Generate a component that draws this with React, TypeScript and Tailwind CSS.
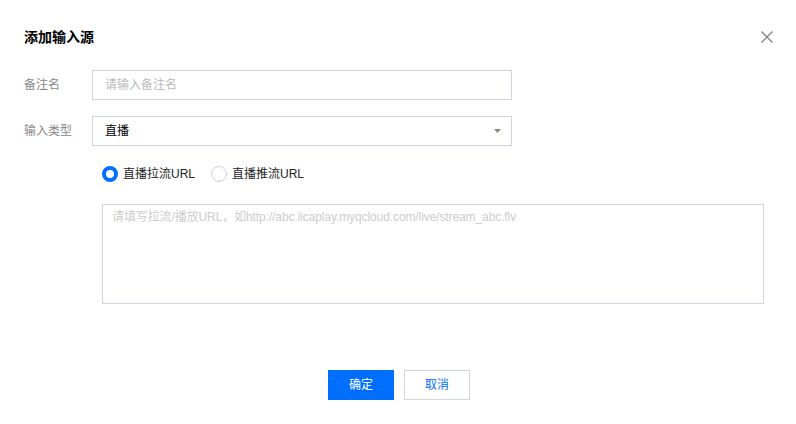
const font = { fontFamily: '"Liberation Sans", "Noto Sans CJK SC", sans-serif' };

function Radio({ checked, label }: { checked?: boolean; label: string }) {
  return (
    <label className="flex items-center gap-[5px] cursor-pointer">
      <span
        className={`h-4 w-4 rounded-full box-border ${checked ? 'border-[4px] border-[#006eff] bg-white' : 'border border-[#ccd2dc] bg-white'}`}
      />
      <span className="text-[12px] text-[#222]">{label}</span>
    </label>
  );
}

export default function App() {
  return (
    <div className="w-[796px] h-[424px] bg-white relative" style={font}>
      {/* header */}
      <div className="flex items-center justify-between pl-6 pr-[22px] pt-[27px]">
        <h3 className="text-[14px] font-bold text-[#000] leading-[20px]">添加输入源</h3>
        <button type="button" className="h-[14px] w-[14px] flex items-center justify-center">
          <svg width="12" height="12" viewBox="0 0 12 12" stroke="#888" strokeWidth="1.4">
            <path d="M0.5 0.5 L11.5 11.5 M11.5 0.5 L0.5 11.5" />
          </svg>
        </button>
      </div>

      {/* form */}
      <div className="pl-6 pt-[23px] flex flex-col">
        <div className="flex items-center h-[30px]">
          <span className="w-[68px] text-[12px] text-[#888]">备注名</span>
          <input
            className="w-[420px] h-[30px] border border-[#cfd5de] px-3 text-[12px] outline-none placeholder:text-[#bbb]"
            placeholder="请输入备注名"
          />
        </div>
        <div className="flex items-center h-[30px] mt-[16px]">
          <span className="w-[68px] text-[12px] text-[#888]">输入类型</span>
          <div className="w-[420px] h-[30px] border border-[#cfd5de] px-3 flex items-center justify-between">
            <span className="text-[12px] text-[#000]">直播</span>
            <svg width="7" height="4" viewBox="0 0 7 4" className="mr-[-2px]">
              <path d="M0 0 H7 L3.5 4 Z" fill="#888" />
            </svg>
          </div>
        </div>
        <div className="flex items-center gap-[16px] ml-[78px] mt-[20px] h-[16px]">
          <Radio checked label="直播拉流URL" />
          <Radio label="直播推流URL" />
        </div>
        <div className="ml-[78px] mt-[22px]">
          <textarea
            className="w-[662px] h-[100px] border border-[#cfd5de] px-[9px] py-[3px] text-[12px] tracking-[-0.1px] outline-none resize-none placeholder:text-[#ccc] block"
            placeholder="请填写拉流/播放URL，如http://abc.licaplay.myqcloud.com/live/stream_abc.flv"
          />
        </div>
      </div>

      {/* footer */}
      <div className="flex justify-center gap-[10px] mt-[66px] pl-[2px]">
        <button type="button" className="w-[66px] h-[30px] bg-[#006eff] text-white text-[12px]">确定</button>
        <button type="button" className="w-[66px] h-[30px] border border-[#cfd5de] text-[#006eff] text-[12px] bg-white">取消</button>
      </div>
    </div>
  );
}
